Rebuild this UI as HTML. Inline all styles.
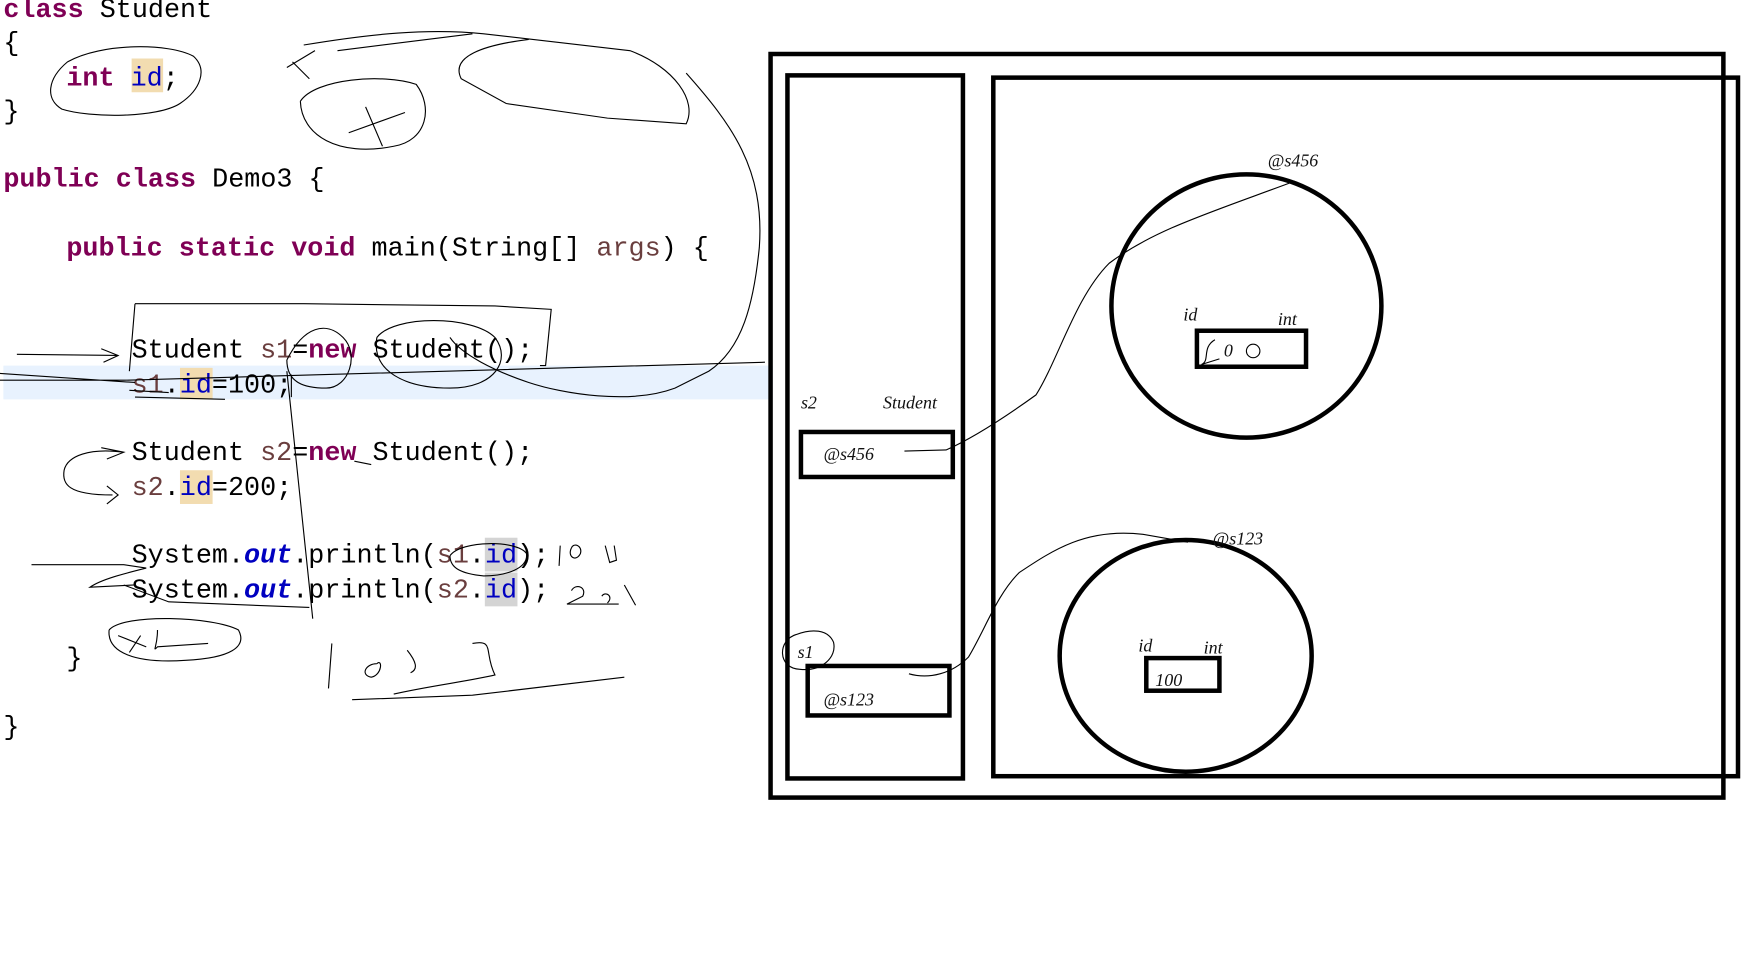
<!DOCTYPE html>
<html><head><meta charset="utf-8"><style>
html,body{margin:0;padding:0;background:#fff;width:1756px;height:967px;overflow:hidden}
svg{display:block}
.c{font-family:"Liberation Mono",monospace;font-size:23.8px;fill:#000;white-space:pre}
.c text,.c tspan{white-space:pre}
.k{fill:#7f0055;font-weight:bold}
.f{fill:#0000c0}
.o{fill:#0000c0;font-weight:bold;font-style:italic}
.v{fill:#6a3e3e}
.m{font-family:"Liberation Serif",serif;font-style:italic;font-size:16px;fill:#111}
.h{fill:none;stroke:#000;stroke-width:1}
.b{fill:none;stroke:#000;stroke-width:4}
</style></head><body>
<svg width="1756" height="967" viewBox="0 0 1561 859.6" xmlns="http://www.w3.org/2000/svg">
<rect x="3" y="325" width="684" height="30" fill="#e8f2fe"/>
<rect x="117" y="52" width="28" height="30" fill="#f2dcb0"/>
<rect x="160" y="327" width="29" height="28" fill="#f2dcb0"/>
<rect x="160" y="418" width="29" height="30" fill="#f2dcb0"/>
<rect x="431" y="478" width="29" height="30" fill="#d4d4d4"/>
<rect x="431" y="509" width="29" height="30" fill="#d4d4d4"/>
<g class="c">
<text x="3" y="15"><tspan class="k">class</tspan> Student</text>
<text x="3" y="45">{</text>
<text x="59" y="76"><tspan class="k">int</tspan> <tspan class="f">id</tspan>;</text>
<text x="3" y="106">}</text>
<text x="3" y="166"><tspan class="k">public</tspan> <tspan class="k">class</tspan> Demo3 {</text>
<text x="59" y="227"><tspan class="k">public</tspan> <tspan class="k">static</tspan> <tspan class="k">void</tspan> main(String[] <tspan class="v">args</tspan>) {</text>
<text x="117" y="318">Student <tspan class="v">s1</tspan>=<tspan class="k">new</tspan> Student();</text>
<text x="117" y="349"><tspan class="v">s1</tspan>.<tspan class="f">id</tspan>=100;</text>
<text x="117" y="409">Student <tspan class="v">s2</tspan>=<tspan class="k">new</tspan> Student();</text>
<text x="117" y="440"><tspan class="v">s2</tspan>.<tspan class="f">id</tspan>=200;</text>
<text x="117" y="500">System.<tspan class="o">out</tspan>.println(<tspan class="v">s1</tspan>.<tspan class="f">id</tspan>);</text>
<text x="117" y="531">System.<tspan class="o">out</tspan>.println(<tspan class="v">s2</tspan>.<tspan class="f">id</tspan>);</text>
<text x="59" y="592">}</text>
<text x="3" y="653">}</text>
</g>
<line x1="259" y1="333" x2="259" y2="353" stroke="#000" stroke-width="1"/>
<g class="h">
<path d="M60 55 C90 38 150 38 172 50 C185 62 178 80 160 92 C140 105 80 105 55 97 C40 88 42 70 60 55"/>
<path d="M120 270 L270 270 L440 272 L490 275 L485 325 L480 325 M120 270 L115 330"/>
<path d="M270 40 C330 30 380 25 430 30 L560 45 C600 60 620 90 610 110 L540 105 L450 92 L410 70 C400 50 430 40 470 35 M300 45 L420 30 M260 55 L275 70 M255 60 L280 45"/>
<path d="M267 90 C280 70 340 65 370 75 C385 95 380 125 350 130 C300 140 268 120 267 90 M310 118 L360 100 M325 95 L340 130"/>
<path d="M610 65 C650 110 680 150 675 220 C670 270 660 310 630 330 L600 345 C560 360 500 350 470 340 C440 330 410 315 400 300"/>
<path d="M15 315 L105 316 M90 310 L105 316 L92 322"/>
<path d="M0 338 L110 338 L680 322 M0 332 L120 340"/>
<path d="M120 353 L200 355 M115 347 L150 349"/>
<path d="M255 320 C270 290 290 285 305 300 C320 315 310 345 290 345 C270 345 255 340 255 320"/>
<path d="M335 300 C350 280 420 280 440 300 C455 320 440 345 400 345 C360 345 330 330 335 300"/>
<path d="M255 330 L278 550 M275 540 L150 535 L110 520"/>
<path d="M110 402 C80 398 60 405 57 418 C55 430 60 440 100 440 M90 398 L110 402 L95 408 M95 432 L105 440 L95 448"/>
<path d="M28 502 L110 502 L130 505 C110 510 90 515 80 522 L120 520"/>
<path d="M315 410 L330 413"/>
<path d="M400 494 C410 480 460 480 468 492 C470 505 450 512 430 512 C410 510 400 505 400 494"/>
<path d="M498 485 L497 503 M508 487 C504 495 512 500 516 492 C518 485 510 482 508 487 M538 485 L542 500 L548 498 L546 485"/>
<path d="M508 525 C512 518 522 522 518 530 L504 537 L550 537 M535 530 C538 525 546 530 540 536 M555 520 L565 538"/>
<path d="M97 560 C110 545 190 548 212 560 C220 575 205 585 165 587 C120 590 95 580 97 560 M105 565 L130 575 M125 565 L115 580 M140 560 C140 575 135 580 140 575 L185 572"/>
<path d="M295 572 L292 612 M335 590 C325 590 320 600 330 602 C340 600 340 585 335 590 M362 578 C370 588 372 595 365 598 M420 572 C440 568 430 580 440 600 C420 605 380 610 350 617"/>
<path d="M313 622 L420 618 L555 602"/>
</g>
<g transform="translate(-4,-1)">
<rect x="689" y="49" width="847" height="661" class="b"/>
<rect x="704" y="68" width="156" height="625" class="b"/>
<rect x="887" y="70" width="662" height="621" class="b"/>
<ellipse cx="1112" cy="273" rx="120" ry="117" class="b"/>
<ellipse cx="1058" cy="584" rx="112" ry="103" class="b"/>
<rect x="716" y="385" width="135" height="40" class="b"/>
<rect x="722" y="593" width="126" height="44" class="b"/>
<rect x="1068" y="295" width="97" height="32" class="b"/>
<rect x="1023" y="586" width="65" height="29" class="b"/>
<g class="m">
<text x="1131" y="149">@s456</text>
<text x="716" y="364">s2</text>
<text x="789" y="364">Student</text>
<text x="736" y="410">@s456</text>
<text x="713" y="586">s1</text>
<text x="736" y="628">@s123</text>
<text x="1082" y="485">@s123</text>
<text x="1056" y="286">id</text>
<text x="1140" y="290">int</text>
<text x="1016" y="580">id</text>
<text x="1074" y="582">int</text>
<text x="1031" y="611">100</text>
<text x="1092" y="318">0</text>
</g>
<g class="h">
<path d="M808 402 L845 401 C870 390 900 370 925 352 C945 320 960 265 990 235 C1030 205 1080 190 1155 162"/>
<path d="M812 600 C830 605 850 600 865 585 C880 560 890 530 910 510 C940 490 970 470 1020 476 L1060 483"/>
<path d="M1084 303 C1072 310 1080 322 1072 325 L1088 320"/>
<circle cx="1118" cy="313" r="6"/>
<path d="M712 565 C695 570 695 595 715 596 C735 598 748 585 745 572 C740 560 725 560 712 565"/>
</g>
</g>
</svg>
</body></html>
